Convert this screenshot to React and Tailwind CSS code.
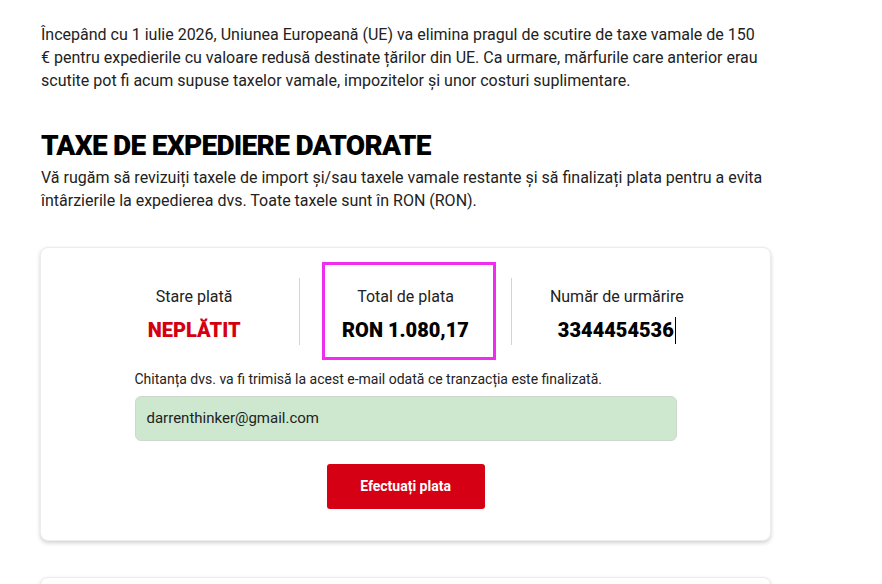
import React from 'react';

const font = { fontFamily: 'Roboto, "Noto Sans", sans-serif' };

const StatusCol = ({ label, children }) => (
  <div className="flex w-[211px] flex-col items-center pt-[7px]">
    <div className="text-[16px] leading-6 text-[#222]">{label}</div>
    <div className="mt-[7px] text-[20px] font-bold leading-7">{children}</div>
  </div>
);

const App = () => {
  return (
    <div className="min-h-[584px] bg-white text-[#222]" style={font}>
      <div className="w-[771px] pl-[41px] pt-[23px]">
        {/* Intro */}
        <p className="w-[722px] text-[16px] leading-[23px]">
          Începând cu 1 iulie 2026, Uniunea Europeană (UE) va elimina pragul de scutire de taxe vamale de 150 € pentru
          expedierile cu valoare redusă destinate țărilor din UE. Ca urmare, mărfurile care anterior erau scutite pot fi
          acum supuse taxelor vamale, impozitelor și unor costuri suplimentare.
        </p>

        <h1 className="mt-[38px] text-[28px] font-black leading-8 tracking-tight text-black">
          TAXE DE EXPEDIERE DATORATE
        </h1>
        <p className="mt-[4px] text-[16px] leading-[23px]">
          Vă rugăm să revizuiți taxele de import și/sau taxele vamale restante și să finalizați plata pentru a evita
          întârzierile la expedierea dvs. Toate taxele sunt în RON (RON).
        </p>

        {/* Payment card */}
        <div className="mt-[35px] -ml-px rounded-lg border border-[#ececec] bg-white px-[48px] pb-[31px] pt-[14px] shadow-[0_2px_4px_rgba(0,0,0,0.18)]">
          <div className="flex items-center justify-center">
            <StatusCol label="Stare plată">
              <span className="font-black text-[#d5000f]">NEPLĂTIT</span>
            </StatusCol>
            <div className="h-[67px] w-px bg-[#d4d4d4]" />
            <div className="flex w-[211px] justify-center">
              <div className="ml-[7px] flex w-[174px] flex-col items-center border-[3px] border-[#f02cf0] pb-[13px] pr-[7px] pt-[20px]">
                <div className="text-[16px] leading-6">Total de plata</div>
                <div className="mt-[7px] text-[20px] font-black leading-7 text-black">RON 1.080,17</div>
              </div>
            </div>
            <div className="h-[67px] w-px bg-[#d4d4d4]" />
            <StatusCol label="Număr de urmărire">
              <span className="flex items-center font-black text-black">
                3344454536
                <span className="ml-px h-[27px] w-px bg-black" />
              </span>
            </StatusCol>
          </div>

          <div className="mx-auto mt-[9px] w-[542px]">
            <p className="text-[14px] leading-5">
              Chitanța dvs. va fi trimisă la acest e-mail odată ce tranzacția este finalizată.
            </p>
            <div className="mt-[7px] flex h-[45px] items-center rounded-md border border-[#cfd8cf] bg-[#cde8cf] px-[11px] text-[15px]">
              darrenthinker@gmail.com
            </div>
            <div className="mt-[23px] flex justify-center">
              <button className="h-[45px] w-[158px] rounded-[3px] bg-[#d60014] text-[14px] font-bold text-white">
                Efectuați plata
              </button>
            </div>
          </div>
        </div>

        {/* Next card (cut off) */}
        <div className="mt-[36px] -ml-px h-[60px] rounded-lg border border-[#ececec] bg-white shadow-[0_2px_4px_rgba(0,0,0,0.18)]" />
      </div>
    </div>
  );
};

export default App;
